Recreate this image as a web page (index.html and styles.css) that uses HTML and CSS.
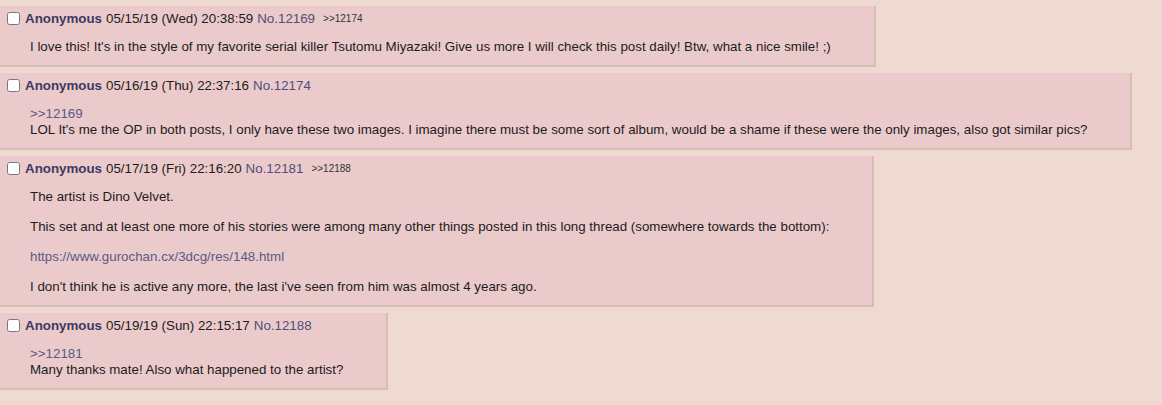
FILE: index.html
```html
<!DOCTYPE html>
<html>
<head>
<meta charset="utf-8">
<link rel="stylesheet" href="styles.css">
</head>
<body>
<div class="thread">
  <div class="post">
    <div class="head">
      <input type="checkbox" class="chk">
      <span class="name">Anonymous</span>
      <span class="date">05/15/19 (Wed) 20:38:59</span>
      <a class="no">No.12169</a>
      <a class="backlink">&gt;&gt;12174</a>
    </div>
    <div class="body">
      <p>I love this! It's in the style of my favorite serial killer Tsutomu Miyazaki! Give us more I will check this post daily! Btw, what a nice smile! ;)</p>
    </div>
  </div>
  <div class="post">
    <div class="head">
      <input type="checkbox" class="chk">
      <span class="name">Anonymous</span>
      <span class="date">05/16/19 (Thu) 22:37:16</span>
      <a class="no">No.12174</a>
    </div>
    <div class="body">
      <p><a class="quote">&gt;&gt;12169</a><br>LOL It's me the OP in both posts, I only have these two images. I imagine there must be some sort of album, would be a shame if these were the only images, also got similar pics?</p>
    </div>
  </div>
  <div class="post">
    <div class="head">
      <input type="checkbox" class="chk">
      <span class="name">Anonymous</span>
      <span class="date">05/17/19 (Fri) 22:16:20</span>
      <a class="no">No.12181</a>
      <a class="backlink">&gt;&gt;12188</a>
    </div>
    <div class="body">
      <p>The artist is Dino Velvet.</p>
      <p>This set and at least one more of his stories were among many other things posted in this long thread (somewhere towards the bottom):</p>
      <p><a class="link">https://www.gurochan.cx/3dcg/res/148.html</a></p>
      <p>I don't think he is active any more, the last i've seen from him was almost 4 years ago.</p>
    </div>
  </div>
  <div class="post">
    <div class="head">
      <input type="checkbox" class="chk">
      <span class="name">Anonymous</span>
      <span class="date">05/19/19 (Sun) 22:15:17</span>
      <a class="no">No.12188</a>
    </div>
    <div class="body">
      <p><a class="quote">&gt;&gt;12181</a><br>Many thanks mate! Also what happened to the artist?</p>
    </div>
  </div>
</div>
</body>
</html>
```

FILE: styles.css
```css
html, body {
  margin: 0;
  padding: 0;
}
body {
  background: #eedad0;
  font-family: "Liberation Sans", Arial, sans-serif;
  font-size: 13.33px;
  color: #1c1c1c;
}
.thread {
  padding-top: 6px;
  display: flex;
  flex-direction: column;
  align-items: flex-start;
  gap: 6px;
}
.post {
  background: #ebcacb;
  border-right: 2px solid #dabcb7;
  border-bottom: 2px solid #dabcb7;
  padding: 3px;
}
.head {
  display: flex;
  align-items: center;
  height: 19px;
  white-space: nowrap;
}
.chk {
  width: 13px;
  height: 13px;
  margin: 3px 5px 3px 4px;
}
.name {
  color: #3a3a62;
  font-weight: bold;
  margin-right: 4px;
}
.date {
  margin-right: 4px;
}
.no {
  color: #4e4e78;
  text-decoration: none;
}
.backlink {
  font-size: 10px;
  color: #333;
  margin-left: 8px;
}
.body {
  margin: 11px 40px 7px 27px;
  line-height: 16px;
}
.body p {
  margin: 0;
}
.body p + p {
  margin-top: 14px;
}
.quote, .link {
  color: #5a5a82;
  text-decoration: none;
}
```
